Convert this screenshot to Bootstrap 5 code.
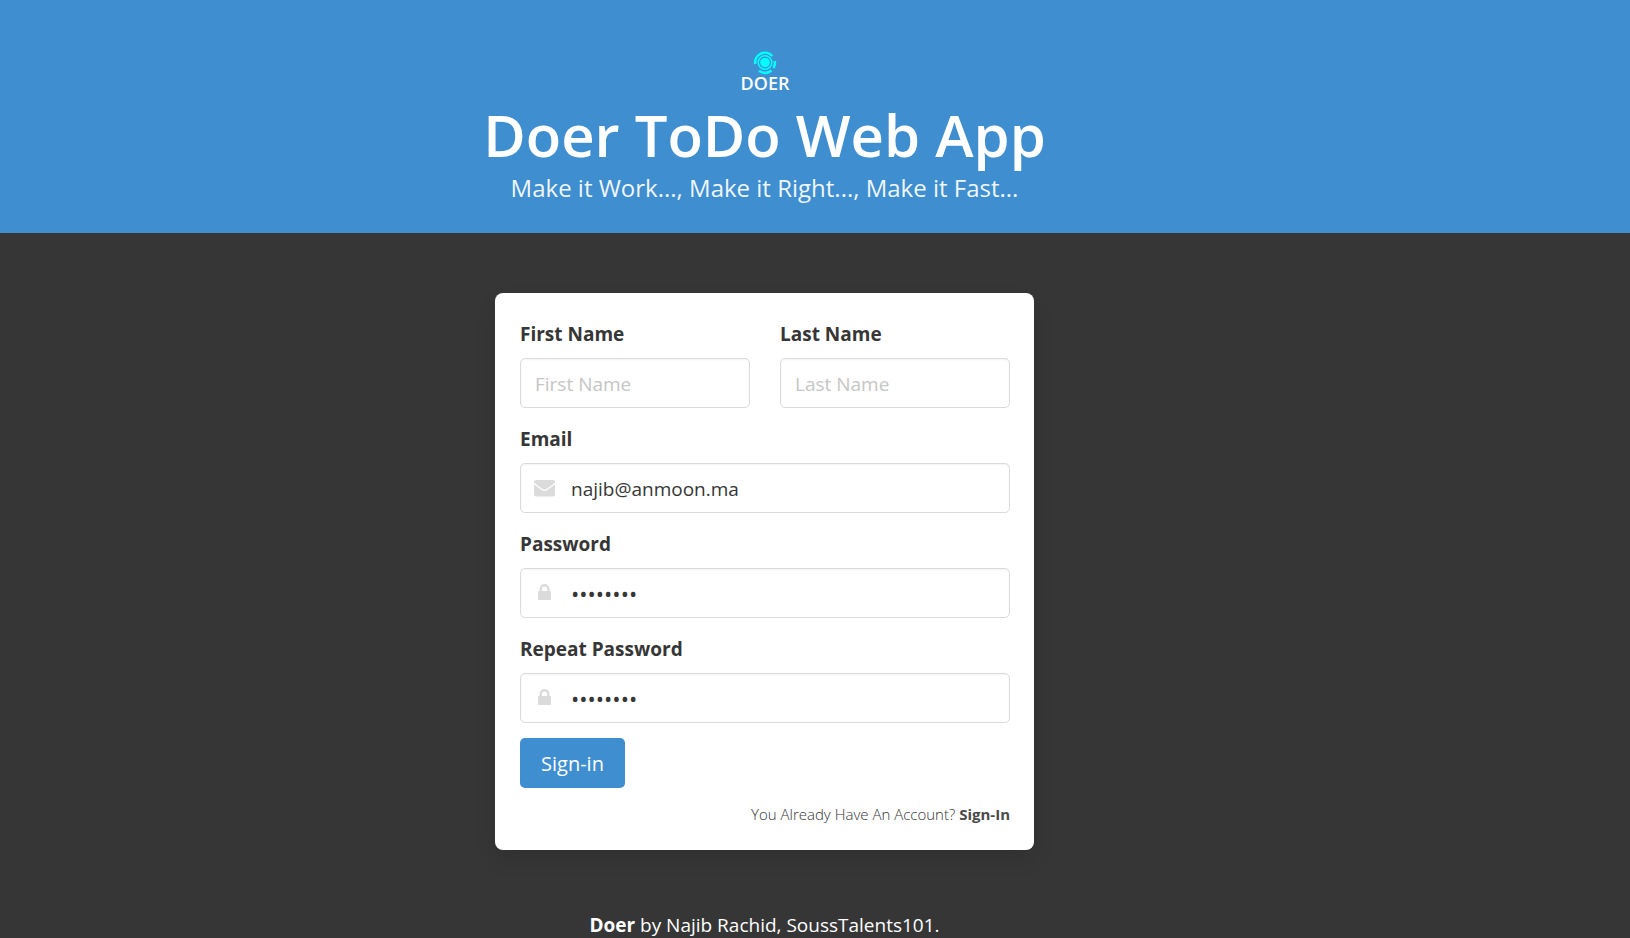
<!DOCTYPE html>
<html lang="en">
<head>
<meta charset="utf-8">
<meta name="viewport" content="width=device-width, initial-scale=1">
<title>Doer ToDo Web App</title>
<link href="https://cdn.jsdelivr.net/npm/bootstrap@5.3.0/dist/css/bootstrap.min.css" rel="stylesheet">
<style>
  :root { --doer-blue: #3e8ed0; --doer-dark: #363636; --doer-line: #dbdbdb; }
  body { background: var(--doer-dark); color: var(--doer-dark); font: 400 19px/30px "Open Sans", "Noto Sans", sans-serif; }
  .page-lane { padding-right: 101px; }
  .hero-band { background: var(--doer-blue); padding-top: 46px; padding-bottom: 26px; }
  .hero-logo { display: block; width: 60px; height: 50px; }
  .hero-title { font-size: 58px; line-height: 68px; font-weight: 600; margin: 5px 0 0; }
  .hero-sub { font-size: 24px; line-height: 38px; margin: 0; opacity: .92; }
  .signup-area { padding: 60px 12px; }
  .signup-card { max-width: 539px; border-radius: 8px; padding: 25px 24px 25px 25px; box-shadow: 0 10px 20px rgba(10,10,10,.1); }
  .field-label { display: block; font-size: 19px; font-weight: 700; padding-top: 2px; margin-bottom: 10px; line-height: 28px; }
  .doer-input { height: 50px; font-size: 19px; font-weight: 400; color: var(--doer-dark); border: 1px solid var(--doer-line); border-radius: 5px; padding: 2px 14px 0; box-shadow: inset 0 1px 2px rgba(10,10,10,.05); }
  .doer-input::placeholder { color: #c6c6c6; }
  .doer-input[type="password"] { font-size: 22px; padding-top: 0; }
  .with-icon .doer-input { padding-left: 50px; }
  .with-icon svg { position: absolute; left: 0; top: 0; width: 50px; height: 50px; fill: var(--doer-line); pointer-events: none; }
  .field-stack { gap: 15px; }
  .name-gap { gap: 30px; }
  .doer-btn { --bs-btn-bg: var(--doer-blue); --bs-btn-color: #fff; --bs-btn-hover-bg: #3488ce; --bs-btn-hover-color: #fff; height: 50px; padding: 2px 21px 0; border: 0; border-radius: 5px; font-size: 20px; }
  .signin-note { font-size: 15px; line-height: 22px; font-weight: 300; color: #363636; }
  .signin-note a { color: #4a4a4a; font-weight: 700; text-decoration: none; }
  .doer-footer { padding-top: 2px; line-height: 26px; }
</style>
</head>
<body>
<header class="hero-band text-white">
  <div class="page-lane d-flex flex-column align-items-center text-center">
    <svg class="hero-logo" viewBox="0 0 60 50" role="img" aria-label="Doer">
      <g fill="none" stroke="#0ff" stroke-width="2.600">
        <circle cx="30" cy="16.500" r="4.800" fill="#0ff" stroke="none"/>
        <circle cx="30" cy="16.500" r="6.800" stroke-width="1.600"/>
        <path d="M20.300 18a9.800 9.800 0 0 1 17-8M39.700 15a9.800 9.800 0 0 1-1.300 7M24 24.800a9.900 9.900 0 0 0 12.500-.300"/>
      </g>
      <text x="30" y="44" text-anchor="middle" font-family="Open Sans" font-size="18" font-weight="600" fill="#fff">DOER</text>
    </svg>
    <h1 class="hero-title">Doer ToDo Web App</h1>
    <p class="hero-sub">Make it Work..., Make it Right..., Make it Fast...</p>
  </div>
</header>
<main class="page-lane">
  <div class="signup-area">
    <form class="signup-card bg-white mx-auto">
      <div class="field-stack d-flex flex-column">
        <div class="name-gap d-flex">
          <div class="flex-fill">
            <label class="field-label" for="first">First Name</label>
            <input class="form-control doer-input" id="first" type="text" placeholder="First Name">
          </div>
          <div class="flex-fill">
            <label class="field-label" for="last">Last Name</label>
            <input class="form-control doer-input" id="last" type="text" placeholder="Last Name">
          </div>
        </div>
        <div>
          <label class="field-label" for="email">Email</label>
          <div class="with-icon position-relative">
            <input class="form-control doer-input" id="email" type="email" value="najib@anmoon.ma">
            <svg viewBox="0 0 50 50" aria-hidden="true"><path d="M16 17h17a2 2 0 0 1 2 2v.500c-3 2.700-6 4.800-9 6.700q-1.500.900-3 0c-3-1.900-6-4-9-6.700V19a2 2 0 0 1 2-2zM14 21.200c3 2.400 5.500 4.200 8.500 6.200q2 1.200 4 0c3-2 5.500-3.800 8.500-6.200V31.500a2 2 0 0 1-2 2H16a2 2 0 0 1-2-2z"/></svg>
          </div>
        </div>
        <div>
          <label class="field-label" for="pass">Password</label>
          <div class="with-icon position-relative">
            <input class="form-control doer-input" id="pass" type="password" value="password">
            <svg viewBox="0 0 50 50" aria-hidden="true"><path fill-rule="evenodd" d="M19.500 23v-2a5 5 0 0 1 10 0v2h.500a1 1 0 0 1 1 1v7a1 1 0 0 1-1 1H19a1 1 0 0 1-1-1v-7a1 1 0 0 1 1-1zM22 23h5.200v-2a2.600 2.600 0 0 0-5.200 0z"/></svg>
          </div>
        </div>
        <div>
          <label class="field-label" for="repeat">Repeat Password</label>
          <div class="with-icon position-relative">
            <input class="form-control doer-input" id="repeat" type="password" value="password">
            <svg viewBox="0 0 50 50" aria-hidden="true"><path fill-rule="evenodd" d="M19.500 23v-2a5 5 0 0 1 10 0v2h.500a1 1 0 0 1 1 1v7a1 1 0 0 1-1 1H19a1 1 0 0 1-1-1v-7a1 1 0 0 1 1-1zM22 23h5.200v-2a2.600 2.600 0 0 0-5.200 0z"/></svg>
          </div>
        </div>
        <button class="btn doer-btn align-self-start" type="submit">Sign-in</button>
        <p class="signin-note text-end mb-0">You Already Have An Account? <a href="#">Sign-In</a></p>
      </div>
    </form>
  </div>
</main>
<footer class="doer-footer page-lane text-white text-center"><strong>Doer</strong> by Najib Rachid, SoussTalents101.</footer>
<script src="https://cdn.jsdelivr.net/npm/bootstrap@5.3.0/dist/js/bootstrap.bundle.min.js"></script>
</body>
</html>
